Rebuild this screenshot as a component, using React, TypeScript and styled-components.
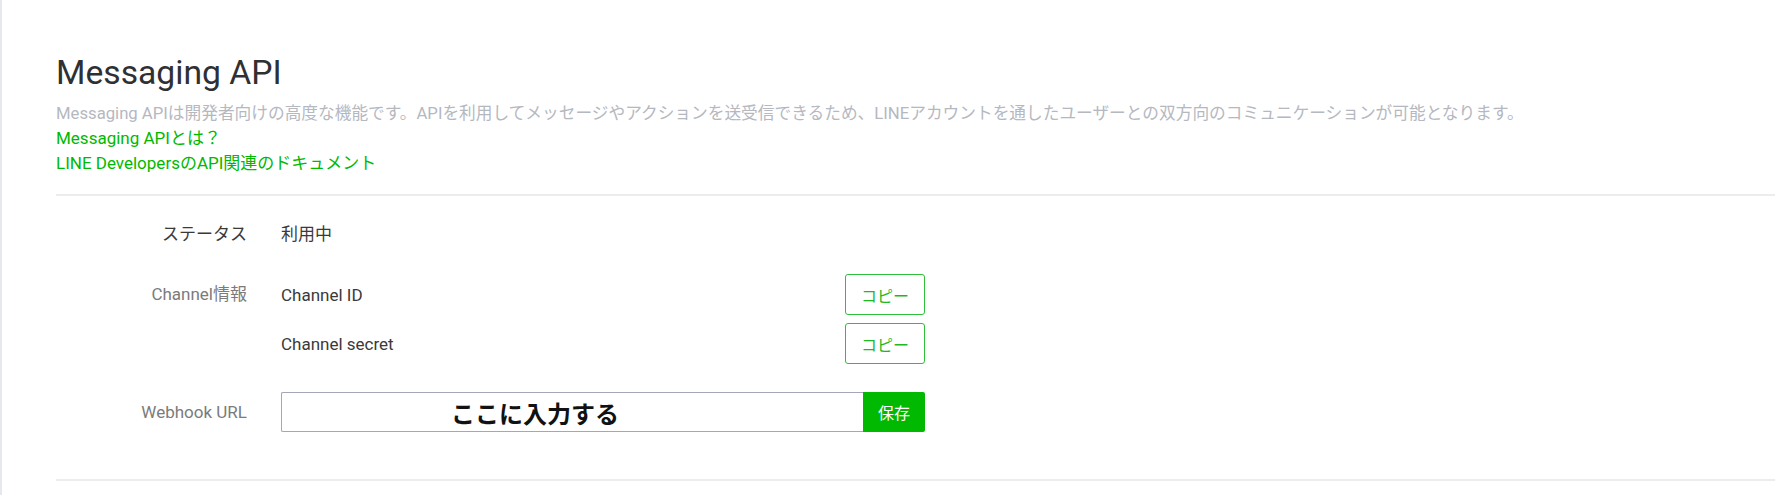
import React from 'react';
import styled, { createGlobalStyle } from 'styled-components';

const GlobalStyle = createGlobalStyle`
  html, body {
    margin: 0;
    padding: 0;
    background: #fff;
  }
  body {
    font-family: Roboto, "Noto Sans CJK JP", sans-serif;
    color: #333;
  }
`;

// Whole settings page, light rule on the left like the console panel
const Page = styled.main`
  box-sizing: border-box;
  min-height: 495px;
  border-left: 2px solid #e6e8ec;
  padding: 54px 13px 0 54px;
`;

const Header = styled.header`
  padding-bottom: 18px;
  border-bottom: 2px solid #ececec;
`;

const Title = styled.h1`
  margin: 0;
  font-size: 33.7px;
  font-weight: 400;
  line-height: 38px;
  color: #2f3033;
`;

const Description = styled.p`
  margin: 9px 0 0;
  font-size: 16.7px;
  line-height: 25px;
  color: #b5b8bf;
`;

const HelpLink = styled.a`
  display: block;
  font-size: 17px;
  line-height: 25px;
  color: #00b900;
  text-decoration: none;
`;

const Settings = styled.section`
  padding: 18px 0 47px;
  border-bottom: 2px solid #ececec;
`;

// One label / value line of the settings table
const Field = styled.div<{ $top?: number }>`
  display: grid;
  grid-template-columns: 191px 644px;
  column-gap: 34px;
  align-items: start;
  margin-top: ${(p) => p.$top ?? 0}px;
`;

const Label = styled.div<{ $strong?: boolean; $height?: number }>`
  text-align: right;
  font-size: 17px;
  line-height: ${(p) => p.$height ?? 40}px;
  color: ${(p) => (p.$strong ? '#3a3a3a' : '#7b7b7b')};
  white-space: nowrap;
`;

const Value = styled.div`
  font-size: 17px;
  line-height: 40px;
  color: #3a3a3a;
`;

const SubList = styled.div`
  display: flex;
  flex-direction: column;
  gap: 8px;
`;

const SubRow = styled.div`
  display: flex;
  align-items: center;
  justify-content: space-between;
  height: 41px;
  font-size: 17px;
  color: #3a3a3a;
`;

const CopyButton = styled.button`
  box-sizing: border-box;
  width: 80px;
  height: 41px;
  padding: 0;
  border: 1px solid #2fc03a;
  border-radius: 3px;
  background: #fff;
  color: #1fb91f;
  font-family: inherit;
  font-size: 16px;
  cursor: pointer;
`;

const UrlForm = styled.form`
  display: flex;
  height: 40px;
`;

const UrlInput = styled.input`
  box-sizing: border-box;
  flex: 1;
  min-width: 0;
  height: 40px;
  margin: 0;
  padding: 0 0 0 169px;
  border: 1px solid #a3a7b6;
  border-right: none;
  border-radius: 2px 0 0 2px;
  font-family: "Noto Sans CJK JP", sans-serif;
  font-size: 24px;
  font-weight: 700;
  color: #111;
  outline: none;
`;

const SaveButton = styled.button`
  box-sizing: border-box;
  width: 62px;
  height: 40px;
  padding: 0;
  border: none;
  border-radius: 0 2px 2px 0;
  background: #00b900;
  color: #fff;
  font-family: inherit;
  font-size: 16px;
  cursor: pointer;
`;

const App: React.FC = () => {
  const channelItems = ['Channel ID', 'Channel secret'];

  return (
    <>
      <GlobalStyle />
      <Page>
        <Header>
          <Title>Messaging API</Title>
          <Description>
            Messaging APIは開発者向けの高度な機能です。APIを利用してメッセージやアクションを送受信できるため、LINEアカウントを通したユーザーとの双方向のコミュニケーションが可能となります。
          </Description>
          <HelpLink href="#">Messaging APIとは？</HelpLink>
          <HelpLink href="#">LINE DevelopersのAPI関連のドキュメント</HelpLink>
        </Header>

        <Settings>
          <Field>
            <Label $strong>ステータス</Label>
            <Value>利用中</Value>
          </Field>

          <Field $top={20}>
            <Label $height={41}>Channel情報</Label>
            <SubList>
              {channelItems.map((item) => (
                <SubRow key={item}>
                  <span>{item}</span>
                  <CopyButton type="button">コピー</CopyButton>
                </SubRow>
              ))}
            </SubList>
          </Field>

          <Field $top={28}>
            <Label>Webhook URL</Label>
            <UrlForm onSubmit={(e) => e.preventDefault()}>
              <UrlInput defaultValue="ここに入力する" />
              <SaveButton type="submit">保存</SaveButton>
            </UrlForm>
          </Field>
        </Settings>
      </Page>
    </>
  );
};

export default App;
